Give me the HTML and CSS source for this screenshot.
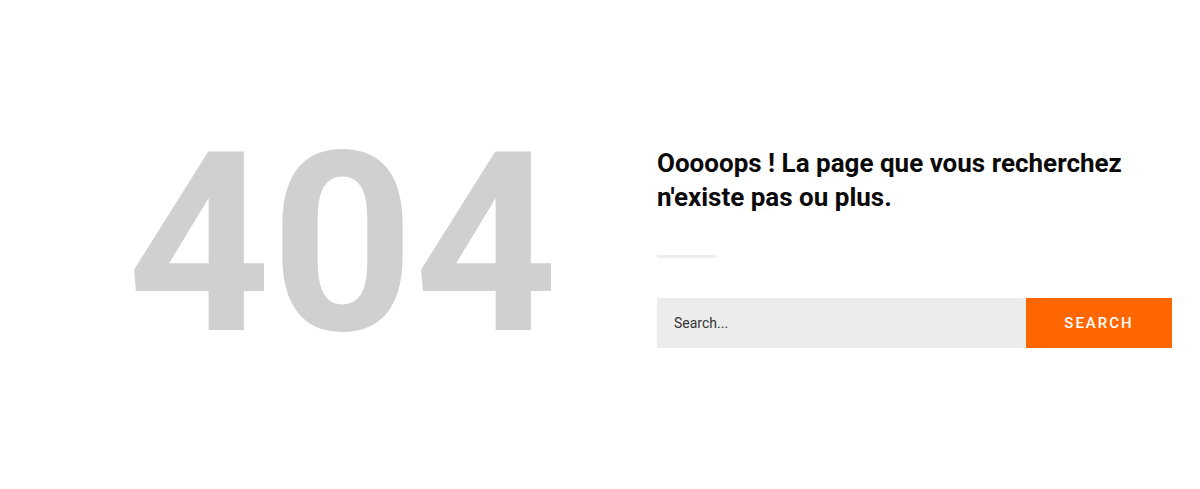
FILE: index.html
```html
<!DOCTYPE html>
<html lang="fr">
  <head>
    <meta charset="UTF-8" />
    <meta name="viewport" content="width=device-width, initial-scale=1.0" />
    <title>Page introuvable</title>
    <link rel="stylesheet" href="styles.css">
  </head>
  <body>
    <main class="page">
      <div class="error-row">
        <div class="error-code">404</div>

        <div class="error-info">
          <h1>Ooooops ! La page que vous recherchez n'existe pas ou plus.</h1>
          <hr class="divider" />
          <form class="search" onsubmit="return false">
            <input type="search" placeholder="Search..." />
            <button type="submit">Search</button>
          </form>
        </div>
      </div>
    </main>
  </body>
</html>
```

FILE: styles.css
```css
:root {
  --text: #0a0a0a;
  --muted: #d0d0d0;
  --field: #ececec;
  --orange: #ff6600;
}

body {
  margin: 0;
  font-family: "Roboto", "Liberation Sans", sans-serif;
  color: var(--text);
  background: #fff;
}

.page {
  min-height: 489px;
  display: flex;
  align-items: center;
  padding: 0 28px;
  box-sizing: border-box;
}

.error-row {
  width: 100%;
  display: grid;
  grid-template-columns: 629px 1fr;
  align-items: center;
}

.error-code {
  font-size: 250px;
  font-weight: 700;
  line-height: 1;
  color: var(--muted);
  text-align: center;
}

.error-info {
  margin-top: 5px;
}

h1 {
  margin: 0;
  font-size: 26px;
  font-weight: 700;
  line-height: 34px;
}

.divider {
  width: 60px;
  height: 3px;
  margin: 41px 0 40px;
  border: none;
  background: #eeeeee;
}

.search {
  display: flex;
  height: 50px;
}

.search input {
  flex: 1;
  min-width: 0;
  border: none;
  padding: 0 17px;
  font-family: inherit;
  font-size: 14px;
  background: var(--field);
  color: #333;
  outline: none;
}

.search input::placeholder {
  color: #333;
}

.search button {
  width: 146px;
  border: none;
  background: var(--orange);
  color: #fff;
  font-family: inherit;
  font-size: 15px;
  font-weight: 500;
  letter-spacing: 2px;
  text-transform: uppercase;
  cursor: pointer;
}
```
